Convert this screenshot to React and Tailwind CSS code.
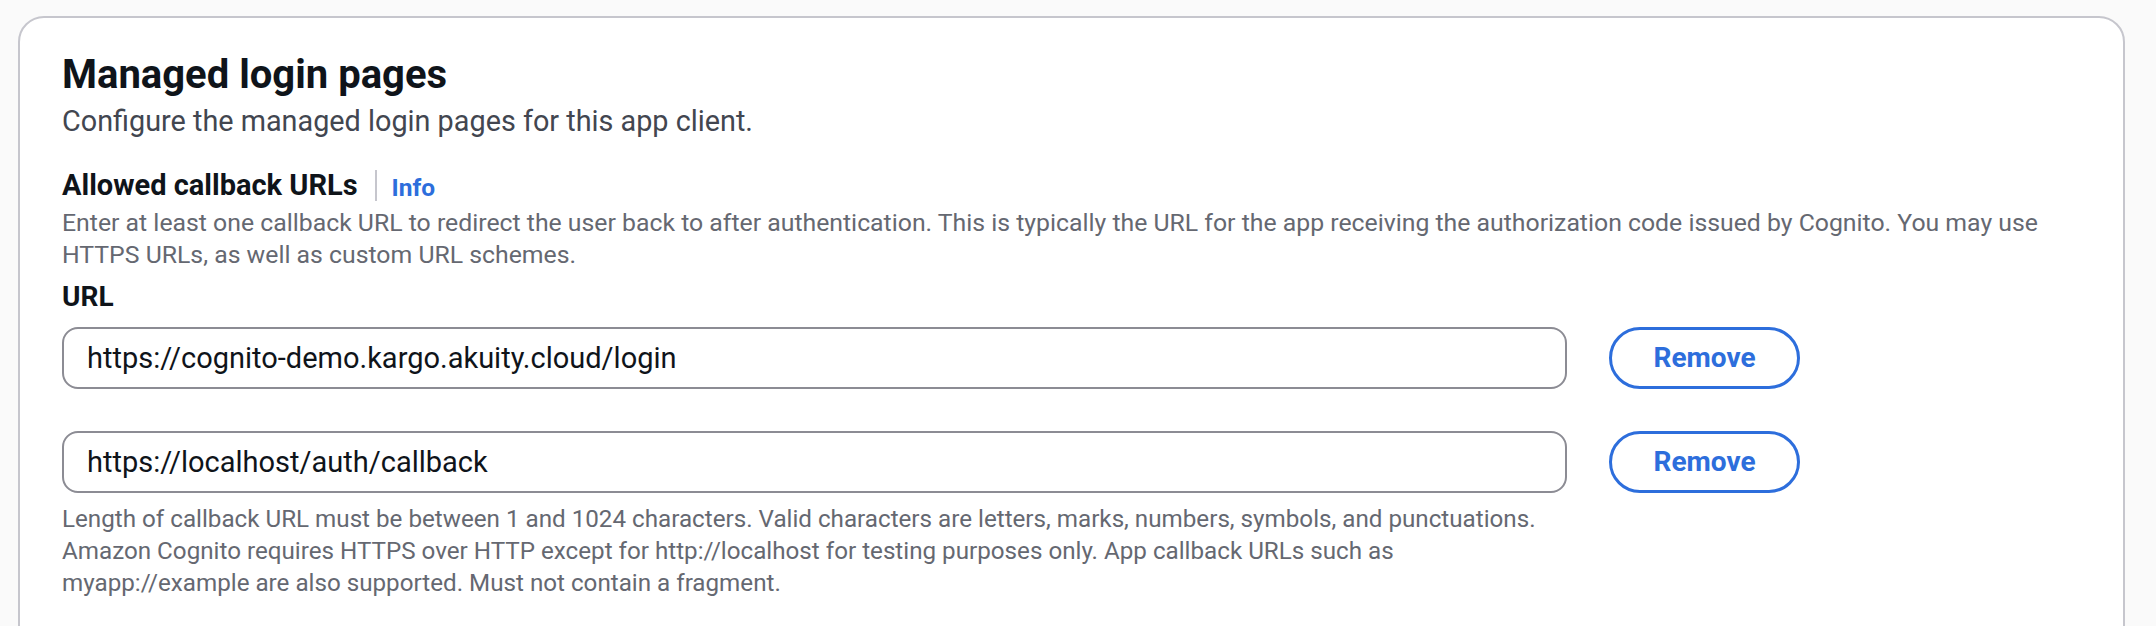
import React from 'react';

const urls = [
    'https://cognito-demo.kargo.akuity.cloud/login',
    'https://localhost/auth/callback',
];

const UrlRow = ({ value }) => (
    <div className="flex items-center gap-[42px]">
        <input
            readOnly
            value={value}
            className="w-[1505px] h-[62px] rounded-[16px] border-2 border-[#8c8c94] bg-white px-[23px] text-[29px] leading-[40px] text-[#0f141a] outline-none"
        />
        <button className="w-[191px] h-[62px] rounded-full border-[3px] border-[#2d6edc] bg-white text-[28px] font-bold text-[#2d6edc]">
            Remove
        </button>
    </div>
);

export default function App() {
    return (
        <div className="min-h-screen bg-[#fafafa] pt-[16px] pl-[18px] pr-[31px] font-[family-name:Roboto,sans-serif] text-[#0f141a]">
            <div className="rounded-[26px] border-2 border-[#c6c6cd] bg-white px-[42px] pt-[33px] pb-[80px]">
                <h1 className="text-[40px] leading-[48px] font-bold">Managed login pages</h1>
                <p className="mt-[2px] text-[28.8px] leading-[40px] text-[#424650]">
                    Configure the managed login pages for this app client.
                </p>

                {/* field label */}
                <div className="mt-[24px] flex h-[40px] items-center">
                    <span className="text-[29px] leading-[40px] font-bold">Allowed callback URLs</span>
                    <span className="ml-[17px] mr-[15px] h-[31px] w-[2px] bg-[#c6c6cd]" />
                    <a href="#" className="pt-[6px] text-[24.5px] leading-[32px] font-bold text-[#2d6edc]">Info</a>
                </div>
                <p className="mt-[2px] text-[24.8px] leading-[32px] text-[#656871]">
                    Enter at least one callback URL to redirect the user back to after authentication. This is typically the URL for the app receiving the authorization code issued by Cognito. You may use
                    <br />
                    HTTPS URLs, as well as custom URL schemes.
                </p>

                <div className="mt-[6px] text-[28px] leading-[40px] font-bold">URL</div>
                <div className="mt-[10px] flex flex-col gap-[42px]">
                    {urls.map(u => <UrlRow key={u} value={u} />)}
                </div>
                <p className="mt-[10px] text-[24.2px] leading-[32px] text-[#656871]">
                    Length of callback URL must be between 1 and 1024 characters. Valid characters are letters, marks, numbers, symbols, and punctuations.
                    <br />
                    Amazon Cognito requires HTTPS over HTTP except for http://localhost for testing purposes only. App callback URLs such as
                    <br />
                    myapp://example are also supported. Must not contain a fragment.
                </p>
            </div>
        </div>
    );
}
